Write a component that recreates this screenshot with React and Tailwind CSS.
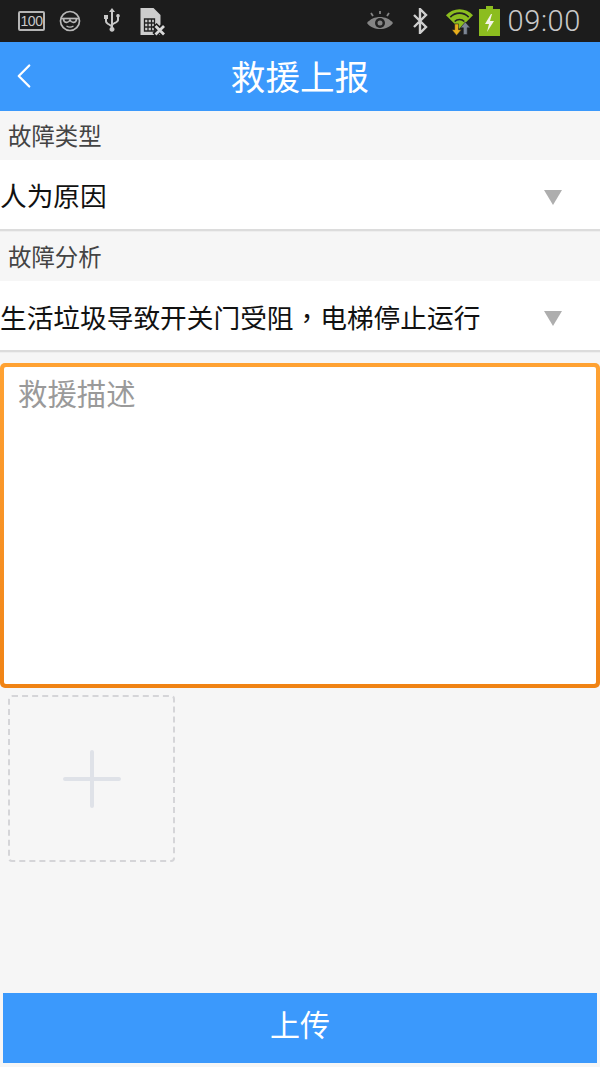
import { ChevronLeft } from "lucide-react";

const cjk = "font-['Roboto','Noto_Sans_CJK_SC',sans-serif]";

function StatusLeft() {
  return (
    <div className="flex items-center">
      {/* battery 100 */}
      <div className="ml-[18px] flex h-[20px] w-[27px] items-center justify-center rounded-[2px] border-2 border-[#b5b5b5] text-[14px] leading-none tracking-[-0.5px] text-[#c8c8c8] font-['Liberation_Sans',sans-serif]">
        100
      </div>
      <svg className="ml-[14px]" width="22" height="22" viewBox="0 0 22 22" fill="none" stroke="#b8b8b8" strokeWidth="1.700">
        <circle cx="11" cy="11" r="9.500" />
        <path d="M2 8.500h18" />
        <path d="M4.500 8.500c0 5 5 5 6.500 1.500c1.500 3.500 6.500 3.500 6.500-1.500" />
        <path d="M7.500 16c2.200 1.400 4.800 1.400 7 0" strokeWidth="1.400" />
      </svg>
      <svg className="ml-[21px]" width="20" height="27" viewBox="0 0 20 27" fill="#c8c8c8">
        <path d="M10 0l3 4h-2v15a2.500 2.500 0 1 1-2 0V4H7z" />
        <path d="M2 7h4v4H5v2c0 2 4 3 4 4v2c-1-1.500-6-2.500-6-6v-2H2z" />
        <path d="M16 6a1.800 1.800 0 0 1 1 3.300V12c0 3-5 3.500-6 5.500V15c1-1 4-1.500 4-3.500V9.300A1.800 1.800 0 0 1 16 6z" />
      </svg>
      <svg className="ml-[17px]" width="28" height="29" viewBox="0 0 27 29">
        <path d="M1 1h13l7 7v20H1z" fill="#cdcdcd" />
        <path d="M5 12h10v12H5zM8.500 12v12M12 12v12M5 16h10M5 20h10" fill="none" stroke="#222" strokeWidth="1.300" />
        <path d="M15 18l10 10M25 18L15 28" stroke="#1c1c1c" strokeWidth="6" />
        <path d="M16 19l8.500 8.500M24.500 19L16 27.500" stroke="#d8d8d8" strokeWidth="2.800" />
      </svg>
    </div>
  );
}

function StatusRight() {
  return (
    <div className="flex items-center">
      <svg width="28" height="22" viewBox="0 0 28 22" fill="none">
        <path d="M1 13c6-8 20-8 26 0c-6 8-20 8-26 0z" fill="#858585" />
        <circle cx="14" cy="13" r="5" fill="#222" />
        <circle cx="14" cy="13" r="2.500" fill="#858585" />
        <path d="M7 6L5 3M14 4V1M21 6l2-3" stroke="#858585" strokeWidth="1.800" />
      </svg>
      <svg className="ml-[18px]" width="16" height="26" viewBox="0 0 16 26" fill="none" stroke="#cfcfcf" strokeWidth="2.400">
        <path d="M2 7l12 12l-6 6V1l6 6L2 19" />
      </svg>
      <svg className="ml-[17px]" width="29" height="30" viewBox="0 0 30 30" fill="none">
        <path d="M1 9a19 19 0 0 1 28 0l-14 14z" fill="#8cbd1f" />
        <path d="M5.500 11a13 13 0 0 1 19 0" stroke="#222" strokeWidth="1.600" />
        <path d="M10 15.500a7 7 0 0 1 10 0" stroke="#222" strokeWidth="1.600" />
        <path d="M10 18h4v6h3l-5 6l-5-6h3z" fill="#e8ae1c" stroke="#222" strokeWidth="0.600" />
        <path d="M21 16l5 6h-3v7h-4v-7h-3z" fill="#7d8694" stroke="#222" strokeWidth="0.600" />
      </svg>
      <svg className="ml-[5px]" width="21" height="30" viewBox="0 0 21 30">
        <path d="M7 0h7v3h7v27H0V3h7z" fill="#8cbd1f" />
        <path d="M12 8l-6 10h4l-2 8l7-11h-4l2-7z" fill="#f4f4e8" />
      </svg>
      <span className="ml-[8px] text-[29px] leading-none text-[#c9c9c9] font-['Roboto',sans-serif] font-light tracking-[0.6px]">09:00</span>
    </div>
  );
}

function SelectRow({ children }) {
  return (
    <div className="flex h-[71px] items-center justify-between border-b-2 border-[#dcdcdc] bg-white pr-[38px] text-[26.7px] text-[#111] shadow-[0_1px_0_#eee]">
      <span className="pt-[5px]">{children}</span>
      <span className="mt-[5px] h-0 w-0 border-x-[9px] border-t-[15px] border-x-transparent border-t-[#aeaeae]" />
    </div>
  );
}

export default function App() {
  return (
    <div className={`flex h-[1067px] w-[600px] flex-col overflow-hidden bg-[#f6f6f6] ${cjk}`}>
      {/* status bar */}
      <div className="flex h-[42px] shrink-0 items-center justify-between bg-[#1c1c1c] pr-[19px]">
        <StatusLeft />
        <StatusRight />
      </div>

      {/* title bar */}
      <div className="relative flex h-[69px] shrink-0 items-center justify-center bg-[#3b99fc] pt-[4px] text-[34.6px] text-white">
        <ChevronLeft className="absolute left-[3px] top-[13px]" size={42} strokeWidth={1.3} />
        救援上报
      </div>

      <div className="flex h-[49px] items-center pl-[8px] pt-[5px] text-[23.4px] text-[#444]">故障类型</div>
      <SelectRow>人为原因</SelectRow>
      <div className="flex h-[50px] items-center pl-[8px] pt-[5px] text-[23.4px] text-[#444]">故障分析</div>
      <SelectRow>
        生活垃圾导致开关门受阻
        <span className="font-['Noto_Sans_CJK_TC',sans-serif]">，</span>
        电梯停止运行
      </SelectRow>

      {/* description */}
      <div className="mt-[11px] h-[325px] shrink-0 rounded-[5px] bg-gradient-to-b from-[#ffa233] to-[#f08314] p-[4px]">
        <textarea
          className="h-full w-full resize-none rounded-[2px] bg-white px-[14px] pt-[9px] text-[29.4px] leading-[38px] outline-none placeholder:text-[#9a9a9a]"
          placeholder="救援描述"
        />
      </div>

      {/* add picture */}
      <div className="ml-[8px] mt-[7px] flex h-[167px] w-[167px] shrink-0 items-center justify-center rounded-[4px] border-2 border-dashed border-[#d5d5d8]">
        <svg width="58" height="58" viewBox="0 0 58 58" stroke="#dfe2e8" strokeWidth="4" strokeLinecap="round">
          <path d="M2 29h54M29 2v54" />
        </svg>
      </div>

      {/* submit */}
      <button className="mx-[3px] mt-[131px] h-[70px] shrink-0 bg-[#3b99fc] pb-[6px] text-[30px] text-white">上传</button>
    </div>
  );
}
